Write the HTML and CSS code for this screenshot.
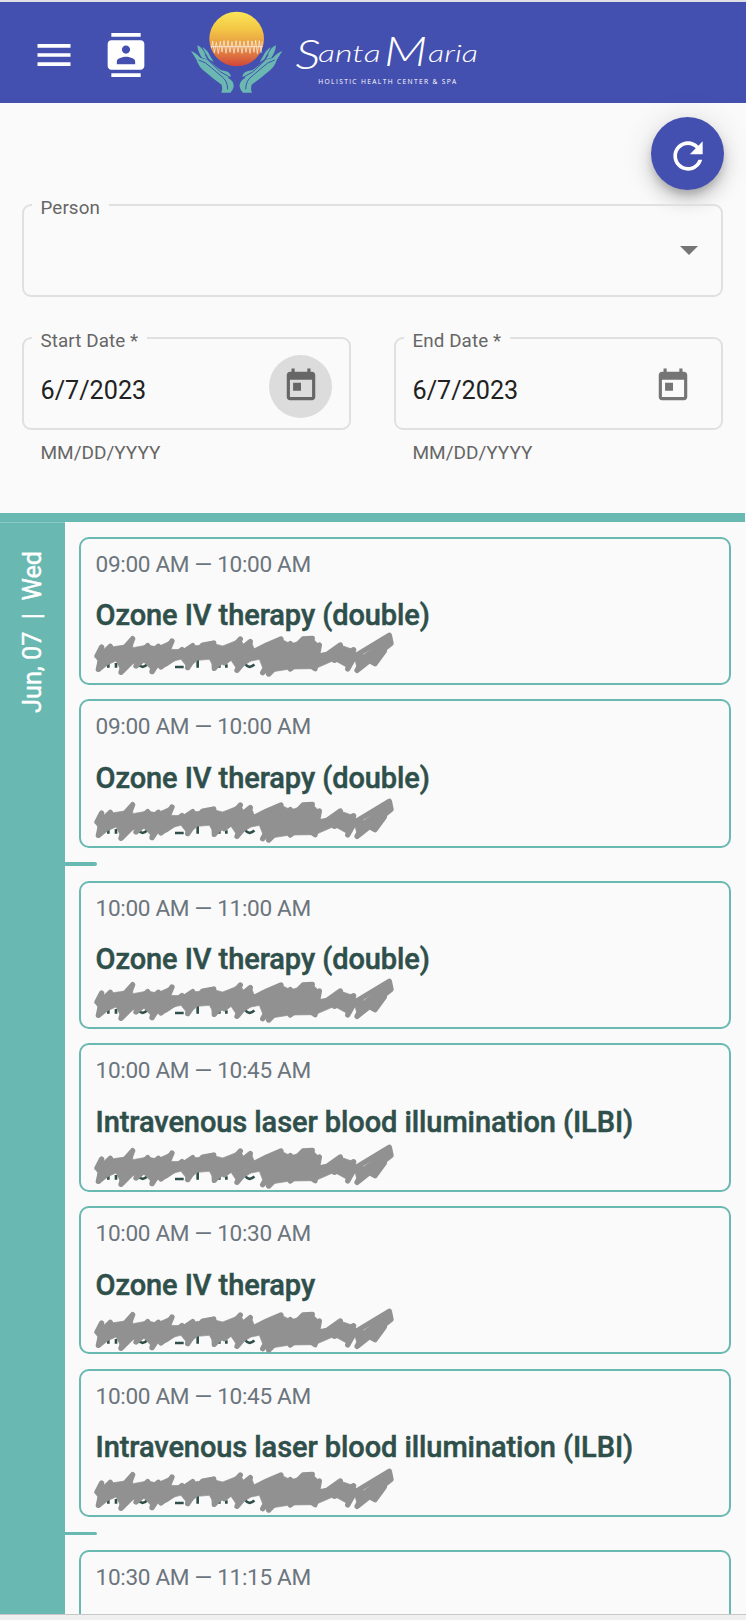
FILE: index.html
```html
<!DOCTYPE html>
<html lang="en">
<head>
<meta charset="utf-8">
<title>Santa Maria - Schedule</title>
<link rel="stylesheet" href="styles.css">
</head>
<body>
<svg class="defs" aria-hidden="true">
  <defs>
    <linearGradient id="sun" x1="0" y1="0" x2="0" y2="1">
      <stop offset="0" stop-color="#fbe558"/><stop offset=".3" stop-color="#f3c945"/><stop offset=".62" stop-color="#e89a45"/><stop offset="1" stop-color="#d1453b"/>
    </linearGradient>
    <symbol id="scribble" viewBox="270 390 920 140">
      <path class="trace" d="M296 470V500M322 484V500M345 486V500M412 490Q425 505 438 490M470 490Q482 506 496 488M522 498H548M590 448V500M655 484V500M676 490V500M732 488Q745 506 760 490M850 498H862"/>
      <path class="mass" d="M290 455L330 438L372 432L395 410L395 440L440 432L468 438L513 418L505 445L545 446L575 435L638 428L665 435L718 414L730 435L752 425L760 445L798 436L840 414L868 428L934 412L955 432L950 460L978 460L1018 432L1058 446L1060 465L1090 460L1165 403L1170 427L1115 475L1068 500L1062 478L1040 500L1000 478L942 503L868 504L803 514L785 500L775 475L750 480L708 505L690 478L640 500L625 475L590 478L560 500L540 475L495 485L453 508L425 480L390 490L360 508L345 480L292 503Z"/>
      <path d="M288 465L302 438L292 470L328 436L298 478L292 505L375 436L395 413L380 450L360 514L440 434L405 495L472 436L453 512L513 420L480 498L543 446L495 488L575 434L560 500L605 432L638 426L640 502L718 414L670 485L748 422L708 508L752 455L798 432L840 414L785 515L868 428L803 519L906 414L934 412L868 504L955 432L942 503L905 475L978 460L1018 432L1000 478L1058 446L1040 504L1062 465L1165 403L1170 427L1068 508L1090 470L1122 488L1150 450"/>
    </symbol>
    <symbol id="today" viewBox="0 0 24 24">
      <path d="M19 3h-1V1h-2v2H8V1H6v2H5c-1.11 0-1.99.9-1.99 2L3 19c0 1.1.89 2 2 2h14c1.1 0 2-.9 2-2V5c0-1.1-.9-2-2-2zm0 16H5V8h14v11zM7 10h5v5H7z"/>
    </symbol>
    <symbol id="hand" viewBox="30 130 135 150">
      <path d="M33 153Q47 157 62 174L86 180Q108 201 124 211Q150 213 153 229L143 233Q162 242 161 260Q158 273 151 278H124Q129 267 125 254Q104 240 80 219Q54 200 50 180Z"/>
      <path d="M52 136Q67 142 76 163L82 178L66 173Q54 157 52 136ZM67 141Q83 151 90 167L101 186L87 178Z"/>
      <path class="crease" d="M56 180Q78 186 94 203L127 231Q142 242 143 268M85 181L122 216L149 231M75 164L88 182"/>
    </symbol>
  </defs>
</svg>

<div class="app">
  <header class="toolbar">
    <svg class="icon-menu" viewBox="0 0 24 24"><path d="M3 18h18v-2H3v2zm0-5h18v-2H3v2zm0-7v2h18V6H3z"/></svg>
    <svg class="icon-contacts" viewBox="0 0 24 24"><path d="M20 0H4v2h16V0zM4 24h16v-2H4v2zM20 4H4c-1.1 0-2 .9-2 2v12c0 1.1.9 2 2 2h16c1.1 0 2-.9 2-2V6c0-1.1-.9-2-2-2zm-8 2.75c1.24 0 2.25 1.01 2.25 2.25s-1.01 2.25-2.25 2.25S9.75 10.24 9.75 9 10.76 6.75 12 6.75zM17 17H7v-1.5c0-1.67 3.33-2.5 5-2.5s5 .83 5 2.5V17z"/></svg>
    <svg class="logo" viewBox="30 30 870 255">
      <circle cx="170" cy="117" r="82" fill="url(#sun)"/>
      <path class="pulse" d="M92 140H248M94 145L98 123L103 158L109 127L115 161L121 124L126 156L132 122L138 160L144 122L150 157L156 125L162 160L168 122L174 157L180 123L186 160L192 124L198 157L204 122L210 160L216 123L222 157L227 121L232 161L238 122L243 158L247 124"/>
      <use href="#hand" x="30" y="130" width="135" height="150"/>
      <use href="#hand" x="30" y="130" width="135" height="150" transform="translate(340 0) scale(-1 1)"/>
      <text class="brand" y="186"><tspan class="initial" x="346" y="206" textLength="76" lengthAdjust="spacingAndGlyphs">S</tspan><tspan x="414" y="186" textLength="188" lengthAdjust="spacingAndGlyphs">anta</tspan></text>
      <text class="brand" y="186"><tspan class="initial" x="612" y="198" textLength="130" lengthAdjust="spacingAndGlyphs">M</tspan><tspan x="744" y="186" textLength="150" lengthAdjust="spacingAndGlyphs">aria</tspan></text>
      <text class="tagline" x="415" y="252" textLength="414">HOLISTIC HEALTH CENTER &amp; SPA</text>
    </svg>
  </header>

  <section class="filters">
    <div class="actions">
      <button class="fab" aria-label="Refresh"><svg viewBox="0 0 24 24"><path d="M17.65 6.35C16.2 4.9 14.21 4 12 4c-4.42 0-7.99 3.58-7.99 8s3.57 8 7.99 8c3.73 0 6.84-2.55 7.73-6h-2.08c-.82 2.33-3.04 4-5.65 4-3.31 0-6-2.69-6-6s2.69-6 6-6c1.66 0 3.14.69 4.22 1.78L13 11h7V4l-2.35 2.35z"/></svg></button>
    </div>
    <div class="field person"><span class="label">Person</span><span class="arrow"></span></div>
    <div class="dates">
      <div class="date">
        <div class="field"><span class="label">Start Date *</span><span class="value">6/7/2023</span><span class="toggle active"><svg><use href="#today"/></svg></span></div>
        <div class="hint">MM/DD/YYYY</div>
      </div>
      <div class="date">
        <div class="field"><span class="label">End Date *</span><span class="value">6/7/2023</span><span class="toggle"><svg><use href="#today"/></svg></span></div>
        <div class="hint">MM/DD/YYYY</div>
      </div>
    </div>
  </section>

  <main class="schedule">
    <aside class="day"><span>Jun, 07 &nbsp;|&nbsp; Wed</span></aside>
    <div class="list">
      <article class="card"><div class="time">09:00 AM — 10:00 AM</div><h2><span>Ozone IV therapy (double)</span></h2><svg class="redaction r1"><use href="#scribble"/></svg></article>
      <article class="card"><div class="time">09:00 AM — 10:00 AM</div><h2><span>Ozone IV therapy (double)</span></h2><svg class="redaction r2"><use href="#scribble"/></svg></article>
      <div class="tick"></div>
      <article class="card"><div class="time">10:00 AM — 11:00 AM</div><h2><span>Ozone IV therapy (double)</span></h2><svg class="redaction r3"><use href="#scribble"/></svg></article>
      <article class="card"><div class="time">10:00 AM — 10:45 AM</div><h2><span>Intravenous laser blood illumination (ILBI)</span></h2><svg class="redaction r4"><use href="#scribble"/></svg></article>
      <article class="card"><div class="time">10:00 AM — 10:30 AM</div><h2><span>Ozone IV therapy</span></h2><svg class="redaction r5"><use href="#scribble"/></svg></article>
      <article class="card"><div class="time">10:00 AM — 10:45 AM</div><h2><span>Intravenous laser blood illumination (ILBI)</span></h2><svg class="redaction r6"><use href="#scribble"/></svg></article>
      <div class="tick"></div>
      <article class="card"><div class="time">10:30 AM — 11:15 AM</div></article>
    </div>
  </main>
  <footer class="edge"></footer>
</div>
</body>
</html>
```
FILE: styles.css
```css
* { box-sizing: border-box; }
body { margin: 0; background: #fafafa; font-family: Roboto, sans-serif; }
.defs { position: absolute; width: 0; height: 0; }
.app { display: flex; flex-direction: column; height: 1620px; overflow: hidden; border-top: 2px solid #dfe1e6; }

.toolbar { display: flex; flex: none; align-items: center; height: 101px; padding: 4px 0 0 32px; background: #4450af; }
.toolbar svg { flex: none; fill: #fff; }
.icon-menu { width: 44px; height: 44px; }
.icon-contacts { width: 44px; height: 44px; margin-left: 28px; }
.toolbar .logo { width: 290px; height: 85px; margin: -4px 0 0 42px; }
.logo use { fill: #6ab8b1; }
.crease { fill: none; stroke: #4450af; stroke-width: 3; }
.pulse { fill: none; stroke: #fff; stroke-width: 3; opacity: .6; }
.brand { font: italic 300 70px Lato, sans-serif; }
.initial { font-size: 122px; }
.tagline { font: 500 20px "Open Sans", sans-serif; }

.filters { flex: none; height: 410px; padding: 14px 23px 0 22px; }
.actions { display: flex; justify-content: flex-end; height: 87px; }
.fab { display: flex; align-items: center; justify-content: center; width: 73px; height: 73px; margin-right: -1px; padding: 4px 0 0; border: 0; border-radius: 50%; background: #4450af; box-shadow: 0 6px 9px -2px rgba(0,0,0,.2), 0 11px 18px rgba(0,0,0,.14), 0 2px 32px rgba(0,0,0,.12); }
.fab svg { width: 44px; height: 44px; fill: #fff; }
.field { position: relative; display: flex; align-items: center; justify-content: space-between; height: 93px; padding: 0 17px 0 16.5px; border: 2px solid #e0e0e0; border-radius: 9px; }
.label { position: absolute; top: -9.5px; left: 7.5px; padding: 0 9px; background: #fafafa; color: #666; font-size: 18.8px; line-height: 22px; letter-spacing: .1px; white-space: nowrap; }
.person { justify-content: flex-end; padding-right: 23.5px; }
.arrow { border: 9px solid transparent; border-top-color: #757575; border-bottom: 0; }
.dates { display: grid; grid-template-columns: 329px 329px; justify-content: space-between; margin-top: 40px; }
.value { color: #212121; font-size: 25.2px; line-height: 30px; padding-top: 14px; }
.toggle { display: flex; align-items: center; justify-content: center; width: 63px; height: 63px; margin: 5px 0 0 0; border-radius: 50%; }
.toggle.active { background: #dcdcdc; }
.toggle svg { width: 38px; height: 38px; fill: #757575; }
.toggle.active svg { fill: #666; }
.hint { padding: 12px 0 0 18.5px; color: #666; font-size: 19px; line-height: 22px; }

.schedule { display: flex; height: 1101px; flex: none; overflow: hidden; border-top: 9px solid #69b8b1; margin-right: 1px; }
.day { flex: none; width: 65px; display: flex; justify-content: center; padding-top: 28px; border-top: 1px solid #8bc9c3; background: #69b8b1; color: #fff; font-size: 25.2px; }
.day span { writing-mode: vertical-rl; transform: rotate(180deg); align-self: flex-start; line-height: 30px; white-space: pre; -webkit-text-stroke: .4px #fff; }
.list { flex: 1; display: flex; flex-direction: column; gap: 14.7px; padding: 14.7px 14px 0 14px; }
.card { position: relative; flex: none; height: 148.1px; padding: 12px 14.5px; border: 2px solid #69b8b1; border-radius: 10px; }
.time { color: #6c757d; font-size: 22.6px; line-height: 28px; letter-spacing: -.32px; white-space: nowrap; }
.card h2 { margin: 19.5px 0 0; color: #2f4f4b; font-size: 29px; font-weight: 500; line-height: 34px; letter-spacing: -.08px; white-space: nowrap; -webkit-text-stroke: .5px #2f4f4b; }
.redaction { position: absolute; left: 9.5px; width: 306.7px; height: 46.7px; fill: none; stroke: #919191; stroke-width: 16; stroke-linecap: round; stroke-linejoin: round; }
.mass { fill: #919191; stroke-width: 2; }
.trace { stroke: #2f4f4b; stroke-width: 8; stroke-linecap: butt; }
.r1 { top: 92px; } .r2 { top: 95.5px; } .r3 { top: 94.5px; } .r4 { top: 97.5px; } .r5 { top: 99px; } .r6 { top: 96px; }
.tick { flex: none; width: 32px; height: 3.7px; margin-left: -14px; border-radius: 0 2px 2px 0; background: #69b8b1; }
.edge { height: 6px; border-top: 1px solid #c8c8c8; background: #f0f0f0; }
```
